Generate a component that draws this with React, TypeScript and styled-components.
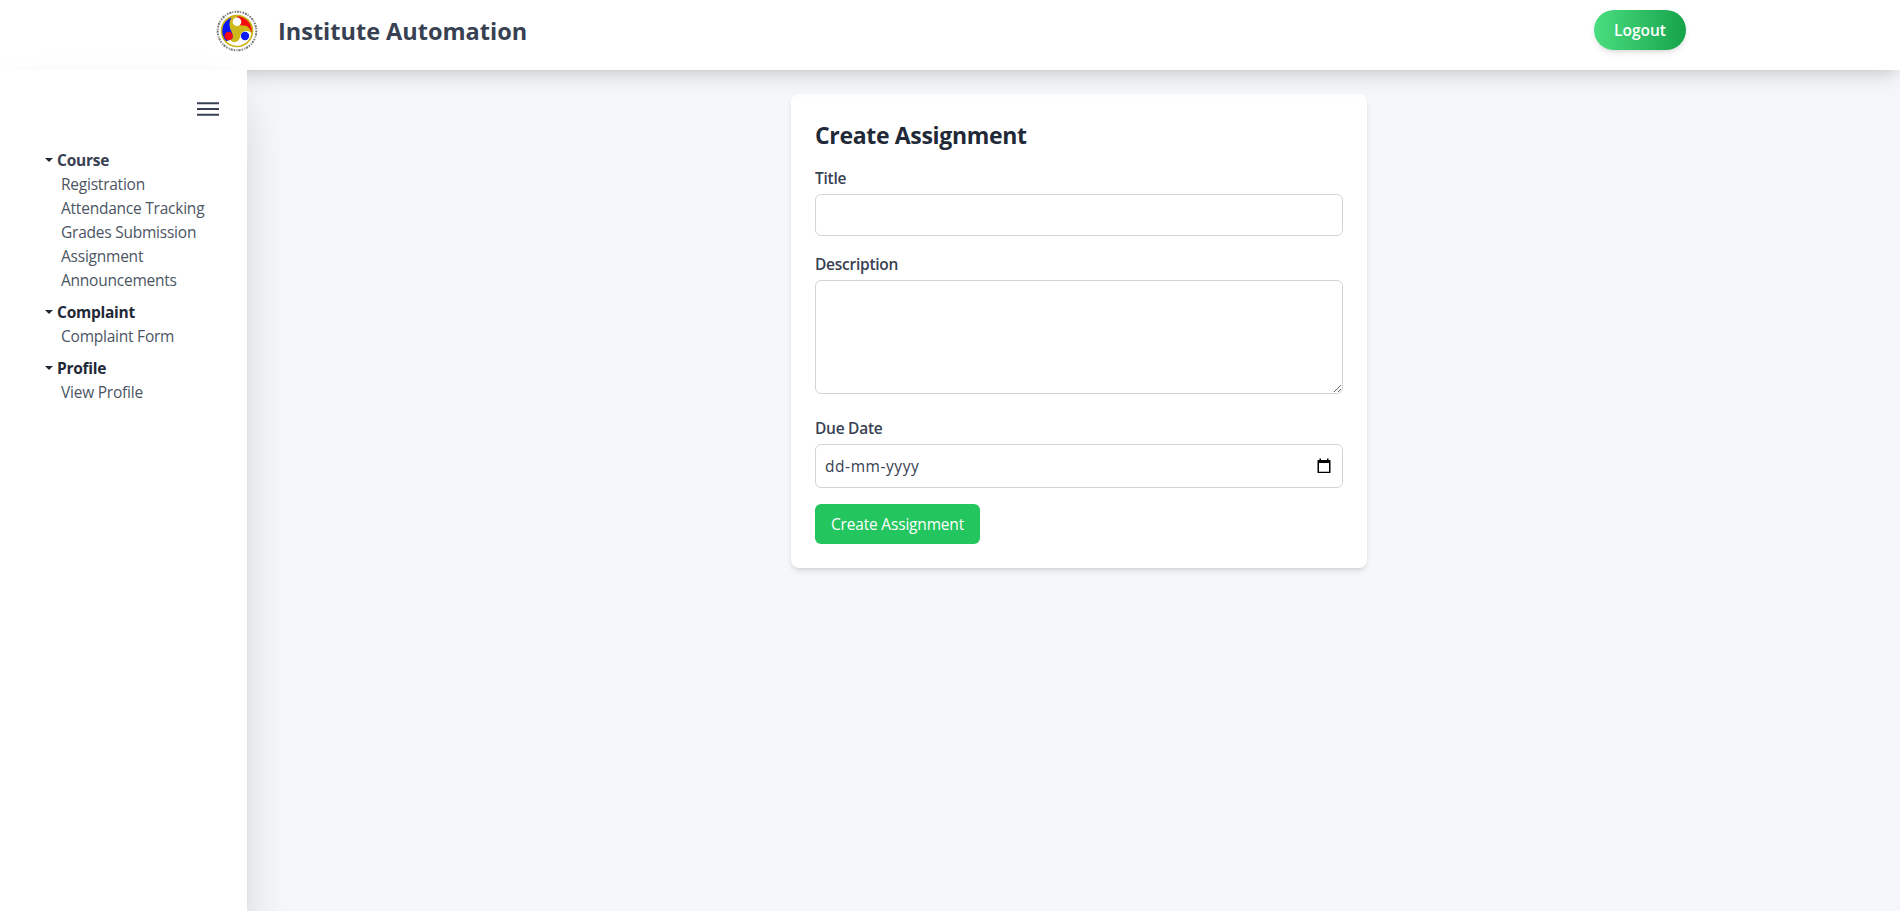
import React from 'react';
import styled, { createGlobalStyle } from 'styled-components';

const GlobalStyle = createGlobalStyle`
  *, *::before, *::after { box-sizing: border-box; }
  body {
    margin: 0;
    background: #f5f7fb;
    color: #1f2937;
    font-family: 'Segoe UI', 'Open Sans', sans-serif;
    font-size: 15.5px;
    line-height: 24px;
    overflow: hidden;
  }
  h1, h2, ul { margin: 0; padding: 0; }
`;

const Page = styled.div`
  height: 100vh;
  display: flex;
  flex-direction: column;
`;

const Header = styled.header`
  position: relative;
  z-index: 1;
  flex: none;
  height: 70px;
  padding: 10px 214px 0 216px;
  display: flex;
  justify-content: space-between;
  align-items: flex-start;
  background: #fff;
  box-shadow: 0 10px 25px -3px rgba(0, 0, 0, 0.1), 0 4px 14px -4px rgba(0, 0, 0, 0.14);
`;

const Brand = styled.div`
  display: flex;
  align-items: center;
  gap: 20px;
`;

const BrandName = styled.h1`
  font-size: 23.5px;
  line-height: 32px;
  font-weight: 700;
  color: #374151;
`;

const LogoutButton = styled.button`
  width: 92px;
  height: 40px;
  padding: 0;
  border: 0;
  border-radius: 20px;
  background: linear-gradient(to right, #4ade80, #16a34a);
  box-shadow: 0 4px 6px -1px rgba(0, 0, 0, 0.1), 0 2px 4px -2px rgba(0, 0, 0, 0.1);
  color: #fff;
  font: 600 15.5px/24px 'Segoe UI', 'Open Sans', sans-serif;
`;

const Body = styled.div`
  flex: 1;
  display: flex;
  align-items: flex-start;
  min-height: 0;
`;

const Sidebar = styled.aside`
  position: relative;
  z-index: 2;
  flex: none;
  width: 247px;
  height: 100vh;
  padding: 27px 26px 0 45px;
  background: #fff;
  box-shadow: 0 25px 50px -12px rgba(0, 0, 0, 0.22);
`;

const MenuButton = styled.button`
  display: block;
  margin: 0 0 27px auto;
  padding: 0;
  border: 0;
  background: none;
  width: 26px;
  height: 24px;
`;

const Group = styled.section`
  margin-bottom: 8px;
`;

const GroupTitle = styled.div<{ $muted?: boolean }>`
  display: flex;
  align-items: center;
  gap: 4px;
  font-weight: 700;
  letter-spacing: -0.25px;
  color: ${(p) => (p.$muted ? '#374151' : '#1f2937')};
`;

const Links = styled.ul`
  list-style: none;
  padding-left: 16px;
  color: #4b5563;
  letter-spacing: -0.23px;
`;

const Main = styled.main`
  flex: 1;
  display: flex;
  justify-content: center;
  align-items: flex-start;
  padding: 24px 0 0 11px;
`;

const Card = styled.form`
  width: 576px;
  padding: 24px;
  border-radius: 8px;
  background: #fff;
  box-shadow: 0 4px 6px -1px rgba(0, 0, 0, 0.1), 0 2px 4px -2px rgba(0, 0, 0, 0.1);
`;

const CardTitle = styled.h2`
  padding-top: 1px;
  margin-bottom: 15px;
  font-size: 23px;
  line-height: 32px;
  font-weight: 700;
  letter-spacing: -0.33px;
`;

const Field = styled.div<{ $gap?: number }>`
  display: flex;
  flex-direction: column;
  gap: 4px;
  margin-bottom: ${(p) => p.$gap ?? 16}px;
`;

const Label = styled.label`
  font-weight: 600;
  letter-spacing: -0.26px;
  color: #374151;
`;

const TextInput = styled.input`
  height: 42px;
  padding: 8px;
  border: 1px solid #d1d5db;
  border-radius: 6px;
  background: #fff;
`;

const TextArea = styled.textarea`
  height: 114px;
  padding: 8px;
  border: 1px solid #d1d5db;
  border-radius: 6px;
  background: #fff;
  resize: vertical;
`;

const DateInput = styled.div`
  display: flex;
  align-items: center;
  justify-content: space-between;
  height: 44px;
  padding: 0 11px 0 9px;
  border: 1px solid #d1d5db;
  border-radius: 6px;
  color: #374151;
  letter-spacing: 0.56px;
`;

const SubmitButton = styled.button`
  display: block;
  width: 165px;
  height: 40px;
  padding: 0;
  border: 0;
  border-radius: 6px;
  background: #22c55e;
  color: #fff;
  font: 400 15.5px/24px 'Segoe UI', 'Open Sans', sans-serif;
  letter-spacing: -0.18px;
`;

const Logo = () => (
  <svg width="42" height="42" viewBox="0 0 42 42">
    <circle cx="21" cy="21" r="19.300" fill="none" stroke="#777" strokeWidth="2" strokeDasharray="1.500 1 2.200 .9 1 1.400" />
    <circle cx="21" cy="21" r="16.300" fill="#c9b112" />
    <circle cx="21" cy="21" r="14.700" fill="#cdb91c" />
    <path d="M21 6.300A14.700 14.700 0 0 1 35.500 23Q34 16.500 28.500 15.500Q24.500 16 22 14Z" fill="#f40b0b" />
    <path d="M15.500 7.400A14.700 14.700 0 0 0 10.500 31.300L16.500 28.500Q17 23.500 14.500 19.500Q12 13 15.500 7.400Z" fill="#0b14f4" />
    <path d="M10.500 31.300A14.700 14.700 0 0 0 35.500 23Q33 20.500 29 21Q24.500 22.500 24 27Q23 32 18.500 32.300Q15 32 14.500 29.800Z" fill="#fff" />
    <circle cx="21" cy="11.800" r="4.300" fill="#fff" />
    <circle cx="12.700" cy="26" r="4.200" fill="#f40b16" />
    <circle cx="29" cy="26" r="4.200" fill="#0b1cf4" />
  </svg>
);

const MenuIcon = () => (
  <svg width="26" height="24" viewBox="0 0 26 24" fill="none" stroke="#374151" strokeWidth="1.900">
    <path d="M2 6.300H24M2 12H24M2 17.700H24" />
  </svg>
);

const Caret = () => (
  <svg width="8" height="4" viewBox="0 0 8 4" fill="#1f2937">
    <path d="M0 0H8L4 4Z" />
  </svg>
);

const CalendarIcon = () => (
  <svg width="14" height="16" viewBox="0 0 14 16">
    <path d="M2.500 .5H4V2H10V.5H11.500V2H13Q13.500 2 13.500 2.500V14.500Q13.500 15 13 15H1Q.5 15 .5 14.500V2.500Q.5 2 1 2H2.500ZM2 5V13.700H12V5Z" fill="#000" fillRule="evenodd" />
  </svg>
);

const groups = [
  {
    title: 'Course',
    links: ['Registration', 'Attendance Tracking', 'Grades Submission', 'Assignment', 'Announcements'],
  },
  { title: 'Complaint', links: ['Complaint Form'] },
  { title: 'Profile', links: ['View Profile'] },
];

export default function App() {
  return (
    <Page>
      <GlobalStyle />
      <Header>
        <Brand>
          <Logo />
          <BrandName>Institute Automation</BrandName>
        </Brand>
        <LogoutButton>Logout</LogoutButton>
      </Header>
      <Body>
        <Sidebar>
          <MenuButton aria-label="Toggle menu">
            <MenuIcon />
          </MenuButton>
          {groups.map((group, i) => (
            <Group key={group.title}>
              <GroupTitle $muted={i === 0}>
                <Caret />
                <span>{group.title}</span>
              </GroupTitle>
              <Links>
                {group.links.map((link) => (
                  <li key={link}>{link}</li>
                ))}
              </Links>
            </Group>
          ))}
        </Sidebar>
        <Main>
          <Card>
            <CardTitle>Create Assignment</CardTitle>
            <Field>
              <Label htmlFor="title">Title</Label>
              <TextInput id="title" />
            </Field>
            <Field $gap={22}>
              <Label htmlFor="description">Description</Label>
              <TextArea id="description" />
            </Field>
            <Field>
              <Label>Due Date</Label>
              <DateInput>
                <span>dd-mm-yyyy</span>
                <CalendarIcon />
              </DateInput>
            </Field>
            <SubmitButton type="button">Create Assignment</SubmitButton>
          </Card>
        </Main>
      </Body>
    </Page>
  );
}
